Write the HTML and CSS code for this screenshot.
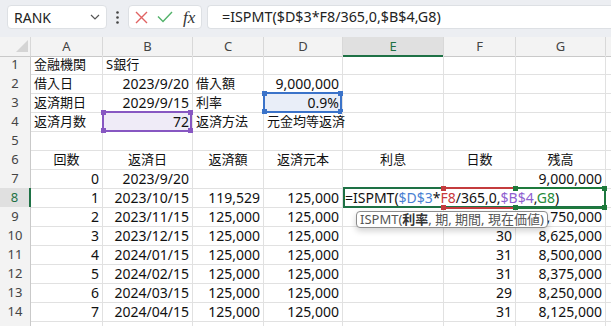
FILE: index.html
```html
<!DOCTYPE html>
<html lang="ja">
<head>
    <meta charset="UTF-8">
    <title>RANK - ISPMT</title>
    <link rel="stylesheet" href="styles.css">
</head>
<body>
    <div class="toolbar">
        <div class="namebox">
            <span>RANK</span>
            <svg width="10" height="6" viewBox="0 0 10 6"><path d="M1 1l4 4 4-4" fill="none" stroke="#555" stroke-width="1.2"/></svg>
        </div>
        <div class="dots">
            <svg width="3" height="13" viewBox="0 0 3 13"><circle cx="1.5" cy="1.5" r="1.3" fill="#444"/><circle cx="1.5" cy="6.5" r="1.3" fill="#444"/><circle cx="1.5" cy="11.5" r="1.3" fill="#444"/></svg>
        </div>
        <div class="fxbox">
            <svg class="cancel" width="13" height="13" viewBox="0 0 13 13"><path d="M1 1l11 11M12 1L1 12" stroke="#e06262" stroke-width="1.4" fill="none"/></svg>
            <svg class="enter" width="16" height="12" viewBox="0 0 16 12"><path d="M1 5.5l5 5L15 1" stroke="#52b26a" stroke-width="1.4" fill="none"/></svg>
            <span class="fx">fx</span>
        </div>
        <div class="formula">=ISPMT($D$3*F8/365,0,$B$4,G8)</div>
    </div>

    <div class="sheet">
        <div class="row head">
            <div class="corner"></div><div>A</div><div>B</div><div>C</div><div>D</div><div class="on">E</div><div>F</div><div>G</div><div></div>
        </div>
        <div class="row">
            <div class="rh">1</div><div class="jp">金融機関</div><div class="jp">S銀行</div><div></div><div></div><div></div><div></div><div></div><div></div>
        </div>
        <div class="row">
            <div class="rh">2</div><div class="jp">借入日</div><div class="r">2023/9/20</div><div class="jp">借入額</div><div class="r">9,000,000</div><div></div><div></div><div></div><div></div>
        </div>
        <div class="row">
            <div class="rh">3</div><div class="jp">返済期日</div><div class="r">2029/9/15</div><div class="jp">利率</div>
            <div class="r ref blue">0.9%<span class="box"><i class="tl"></i><i class="tr"></i><i class="bl"></i><i class="br"></i></span></div>
            <div></div><div></div><div></div><div></div>
        </div>
        <div class="row">
            <div class="rh">4</div><div class="jp">返済月数</div>
            <div class="r ref purple">72<span class="box"><i class="tl"></i><i class="tr"></i><i class="bl"></i><i class="br"></i></span></div>
            <div class="jp">返済方法</div><div class="jp spill">元金均等返済</div><div></div><div></div><div></div><div></div>
        </div>
        <div class="row">
            <div class="rh">5</div><div></div><div></div><div></div><div></div><div></div><div></div><div></div><div></div>
        </div>
        <div class="row">
            <div class="rh">6</div><div class="jp c">回数</div><div class="jp c">返済日</div><div class="jp c">返済額</div><div class="jp c">返済元本</div><div class="jp c">利息</div><div class="jp c">日数</div><div class="jp c">残高</div><div></div>
        </div>
        <div class="row">
            <div class="rh">7</div><div class="r">0</div><div class="r">2023/9/20</div><div></div><div></div><div></div><div></div><div class="r">9,000,000</div><div></div>
        </div>
        <div class="row">
            <div class="rh on">8</div><div class="r">1</div><div class="r">2023/10/15</div><div class="r">119,529</div><div class="r">125,000</div>
            <div class="edit">=ISPMT(<span class="c-blue">$D$3</span>*<span class="c-red">F8</span>/365,0,<span class="c-purple">$B$4</span>,<span class="c-green">G8</span>)
                <span class="box red"><i class="tl"></i><i class="bl"></i></span>
                <span class="box green"><i class="tl"></i><i class="tr"></i><i class="bl"></i><i class="br"></i></span>
            </div>
            <div></div>
        </div>
        <div class="row">
            <div class="rh">9</div><div class="r">2</div><div class="r">2023/11/15</div><div class="r">125,000</div><div class="r">125,000</div><div></div><div></div><div class="r">8,750,000</div><div></div>
        </div>
        <div class="row">
            <div class="rh">10</div><div class="r">3</div><div class="r">2023/12/15</div><div class="r">125,000</div><div class="r">125,000</div><div></div><div class="r">30</div><div class="r">8,625,000</div><div></div>
        </div>
        <div class="row">
            <div class="rh">11</div><div class="r">4</div><div class="r">2024/01/15</div><div class="r">125,000</div><div class="r">125,000</div><div></div><div class="r">31</div><div class="r">8,500,000</div><div></div>
        </div>
        <div class="row">
            <div class="rh">12</div><div class="r">5</div><div class="r">2024/02/15</div><div class="r">125,000</div><div class="r">125,000</div><div></div><div class="r">31</div><div class="r">8,375,000</div><div></div>
        </div>
        <div class="row">
            <div class="rh">13</div><div class="r">6</div><div class="r">2024/03/15</div><div class="r">125,000</div><div class="r">125,000</div><div></div><div class="r">29</div><div class="r">8,250,000</div><div></div>
        </div>
        <div class="row">
            <div class="rh">14</div><div class="r">7</div><div class="r">2024/04/15</div><div class="r">125,000</div><div class="r">125,000</div><div></div><div class="r">31</div><div class="r">8,125,000</div><div></div>
        </div>
        <div class="row">
            <div class="rh"></div><div></div><div></div><div></div><div></div><div></div><div></div><div></div><div></div>
        </div>

        <!-- 関数の引数ヒント -->
        <div class="tip">ISPMT(<b>利率</b>, 期, 期間, 現在価値)</div>
    </div>
</body>
</html>
```

FILE: styles.css
```css
* {
    margin: 0;
    padding: 0;
    box-sizing: border-box;
}

body {
    width: 611px;
    height: 326px;
    overflow: hidden;
    background: #fff;
    font-family: "Noto Sans", "Noto Sans CJK JP", sans-serif;
    font-size: 14px;
    color: #111;
}

/* formula bar */
.toolbar {
    height: 37px;
    background: #eceef2;
    display: flex;
    align-items: flex-start;
    padding: 5px 0 0 7px;
}

.namebox {
    width: 100px;
    height: 24px;
    background: #fff;
    border: 1px solid #dde0e4;
    border-radius: 4px;
    display: flex;
    align-items: center;
    justify-content: space-between;
    padding: 0 6px 0 6px;
    color: #222;
}

.dots {
    width: 21px;
    height: 24px;
    display: flex;
    align-items: center;
    justify-content: center;
}

.fxbox {
    width: 74px;
    height: 24px;
    background: #fff;
    border: 1px solid #dde0e4;
    border-radius: 4px;
    display: flex;
    align-items: center;
    padding-left: 6px;
}

.fxbox .enter {
    margin-left: 9px;
}

.fx {
    margin-left: 10px;
    font-family: "Liberation Serif", serif;
    font-style: italic;
    font-size: 17px;
    color: #333;
    line-height: 1;
}

.formula {
    flex: 1;
    height: 24px;
    margin-left: 5px;
    background: #fff;
    border: 1px solid #dde0e4;
    border-right: none;
    border-radius: 4px 0 0 4px;
    padding-left: 14px;
    line-height: 22px;
    font-size: 14.3px;
    color: #222;
}

/* grid */
.sheet {
    position: relative;
}

.row {
    display: grid;
    grid-template-columns: 31px 72px 90px 71px 79px 101px 72px 90px 1fr;
    height: 19px;
}

.row > div {
    border-right: 1px solid #e1e1e1;
    border-bottom: 1px solid #e1e1e1;
    line-height: 19px;
    padding: 0 3px;
    white-space: nowrap;
}

.jp {
    font-size: 13px;
}

.r {
    text-align: right;
}

.c {
    text-align: center;
}

.spill {
    overflow: visible;
    position: relative;
    z-index: 1;
}

.head {
    height: 18px;
}

.head > div {
    background: #f3f3f3;
    text-align: center;
    color: #444;
    font-size: 13px;
    line-height: 18px;
    border-right-color: #d8d8d8;
    border-bottom-color: #c9c9c9;
}

.head .on {
    background: #e0e0e0;
    color: #1e7145;
    border-bottom: 2px solid #1e7145;
}

.corner {
    position: relative;
}

.corner::after {
    content: '';
    position: absolute;
    right: 2px;
    bottom: 4px;
    border-left: 12px solid transparent;
    border-bottom: 12px solid #d4d4d4;
}

.row > .rh {
    background: #f3f3f3;
    text-align: center;
    color: #444;
    font-size: 13px;
    padding: 0;
    border-right-color: #c9c9c9;
    border-bottom-color: #dadada;
}

.row > .rh.on {
    background: #e0e0e0;
    color: #1e7145;
    border-right: 2px solid #1e7145;
}

/* reference boxes */
.ref {
    position: relative;
}

.box {
    position: absolute;
    top: -1px;
    left: -1px;
    right: 0;
    bottom: -1px;
    border: 2px solid;
}

.box i {
    position: absolute;
    width: 5px;
    height: 5px;
    background: currentColor;
}

.box .tl { top: -3px; left: -3px; }
.box .tr { top: -3px; right: -3px; }
.box .bl { bottom: -3px; left: -3px; }
.box .br { bottom: -3px; right: -3px; }

.blue {
    background: #e9eef8;
}

.blue .box {
    color: #3b73c9;
}

.purple {
    background: #efebf7;
}

.purple .box {
    color: #8757c2;
}

/* editing cell */
.row > .edit {
    grid-column: span 3;
    position: relative;
    z-index: 2;
    background: #fff;
    padding: 0 2px;
    border: none;
    color: #111;
}

.edit::before {
    content: '';
    position: absolute;
    top: -1px;
    left: 0;
    right: 0;
    bottom: 0;
    border: 2px solid #1e7145;
}

.edit .box.red {
    left: 101px;
    right: auto;
    width: 72px;
    border-left: none;
    border-right: none;
    color: #c43c3e;
}

.edit .box.green {
    left: 173px;
    right: 0;
    border-left: none;
    border-right-style: dashed;
    color: #1e7a3c;
}

.c-blue { color: #4a7fd2; }
.c-red { color: #c8383b; }
.c-purple { color: #8f5fd0; }
.c-green { color: #258a3a; }

/* argument hint */
.tip {
    position: absolute;
    left: 356px;
    top: 174px;
    height: 17px;
    padding: 0 3px;
    border: 1px solid #8c8c8c;
    border-radius: 4px;
    background: #fff;
    font-size: 13px;
    line-height: 15px;
    color: #555;
    box-shadow: 0 3px 6px rgba(0, 0, 0, 0.18);
    white-space: nowrap;
    z-index: 3;
}

.tip b {
    color: #333;
}
```
